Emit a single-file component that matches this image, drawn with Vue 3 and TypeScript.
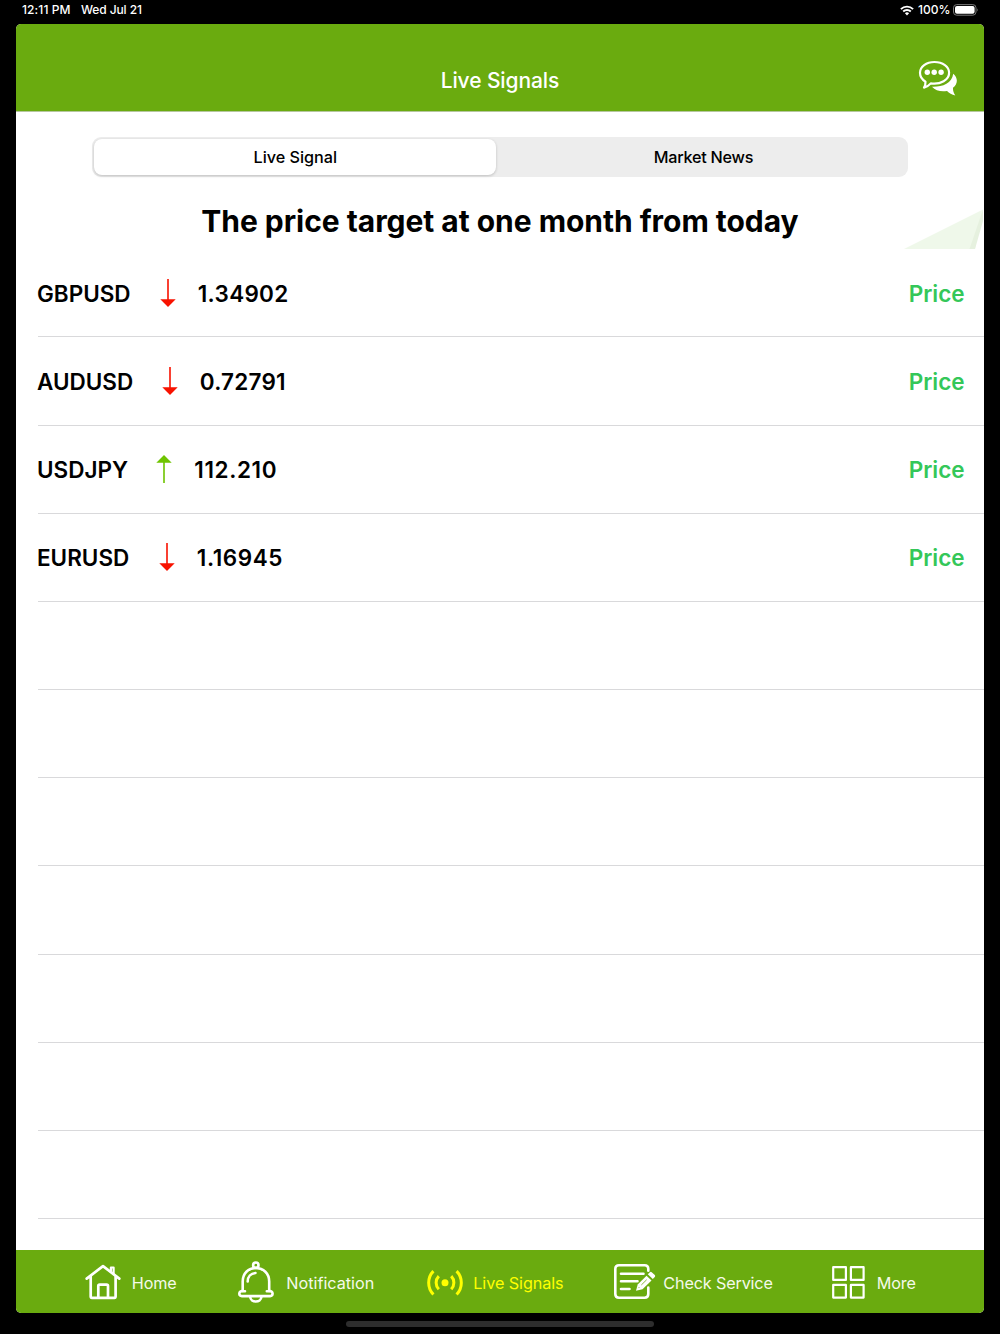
<script setup lang="ts">
import { ref } from 'vue'

interface Signal {
  pair: string
  value: string
  trend: 'up' | 'down'
  pairWidth: number
  spacing: number
}

const signals: Signal[] = [
  { pair: 'GBPUSD', value: '1.34902', trend: 'down', pairWidth: 93.3, spacing: 0.3 },
  { pair: 'AUDUSD', value: '0.72791', trend: 'down', pairWidth: 95.3, spacing: 0.2 },
  { pair: 'USDJPY', value: '112.210', trend: 'up', pairWidth: 89.8, spacing: 0.6 },
  { pair: 'EURUSD', value: '1.16945', trend: 'down', pairWidth: 92.3, spacing: 0.6 },
]
const emptyRows = 7
const segments = ['Live Signal', 'Market News']
const selected = ref(0)
</script>

<template>
  <div class="device">
    <div class="status">
      <span class="time">12:11 PM</span>
      <span class="date">Wed Jul 21</span>
      <svg class="wifi" width="14" height="11" viewBox="0 0 14 11" fill="none" stroke="#fff" stroke-width="1.9">
        <path d="M.9 4.1a8.7 8.7 0 0 1 12.2 0M3.2 6.5a5.4 5.4 0 0 1 7.6 0" />
        <path d="M7 10.5 4.9 8.3a3 3 0 0 1 4.2 0z" fill="#fff" stroke="none" />
      </svg>
      <span class="percent">100%</span>
      <svg class="battery" width="26" height="12" viewBox="0 0 26 12">
        <rect x=".5" y=".6" width="22.5" height="10.6" rx="3.2" fill="none" stroke="#777" />
        <rect x="2" y="2" width="19.6" height="7.8" rx="2" fill="#fff" />
        <path d="M24 4.2q1.6 1.7 0 3.4z" fill="#777" />
      </svg>
    </div>

    <div class="screen">
      <header class="bar">
        <h1>Live Signals</h1>
        <svg class="chat" width="40" height="37" viewBox="0 0 40 37">
          <path d="M35.200 13.800c4.800 4.100 5 10-.2 14-.2 2.700.6 5.200 2.300 7.700-3.400-.8-6.200-2.400-8.300-4.500-6.400.8-11.600-.3-15-4.200 10.200.3 20-3.200 21.200-13z" fill="#fff" />
          <path d="M16.400 2C8.300 2 2 6.700 2 12.800c0 3.800 2.100 6.900 5.500 8.900.1 2.500-.4 4.100-1.500 5.900 3-.8 5.100-2.200 6.800-4.200 9.800 1.300 18.300-3.500 18.300-10.600C31.100 6.700 24.800 2 16.400 2z" fill="#6aab0f" stroke="#fff" stroke-width="2.200" stroke-linejoin="round" />
          <g fill="#fff">
            <circle cx="9.300" cy="12.300" r="2.700" />
            <circle cx="16.200" cy="12.300" r="2.700" />
            <circle cx="23.100" cy="12.300" r="2.700" />
          </g>
        </svg>
      </header>

      <section class="top">
        <div class="segmented">
          <button
            v-for="(label, i) in segments"
            :key="label"
            :class="{ active: selected === i }"
            @click="selected = i"
          >{{ label }}</button>
        </div>
        <h2>The price target at one month from today</h2>
        <svg class="fold" width="80" height="40" viewBox="0 0 80 40">
          <path d="M0 40 79 .5 71 40z" fill="#eff8ea" />
          <path d="M79 .5 65.500 40H71L79 12z" fill="#e6f1df" />
        </svg>
      </section>

      <ul class="list">
        <li v-for="s in signals" :key="s.pair">
          <span class="pair" :style="{ width: s.pairWidth + 'px' }">{{ s.pair }}</span>
          <svg class="arrow" :class="s.trend" width="16" height="28" viewBox="0 0 16 28">
            <path d="M7.200 0h1.600v20.200h6.900L8 28 .3 20.200h6.900z" fill="currentColor" />
          </svg>
          <span class="value" :style="{ letterSpacing: s.spacing + 'px' }">{{ s.value }}</span>
          <span class="price">Price</span>
        </li>
        <li v-for="n in emptyRows" :key="n"></li>
      </ul>

      <nav class="tabs">
        <a class="home">
          <svg width="36" height="36" viewBox="0 0 36 36" fill="none" stroke="#fff" stroke-width="2.700" stroke-linecap="round" stroke-linejoin="round">
            <path d="M1.700 14.600 18 2.100l16.300 12.500M5.700 12.300v20.300q0 1.200 1.200 1.200h22.500q1.200 0 1.200-1.200V12.300" />
            <path d="M13.300 33.500V22q0-1.400 1.400-1.400h6.900Q23 20.600 23 22v11.500" />
            <path d="M25.900 7V3.500h2.700v5.800" stroke-width="2.200" />
          </svg>
          <span>Home</span>
        </a>
        <a class="notification">
          <svg width="36" height="42" viewBox="0 0 36 42" fill="none" stroke="#fff" stroke-width="2.600" stroke-linecap="round" stroke-linejoin="round">
            <circle cx="17.800" cy="4.200" r="2.700" />
            <path d="M7 30.300H4.600a2.500 2.500 0 0 0-3.300 2.300q0 2.500 2.600 2.500h28.200q2.500 0 2.500-2.500a2.500 2.500 0 0 0-3.300-2.300h-2.500" />
            <path d="M4.700 30V20.500C4.700 12.500 10.200 7 17.800 7s13.400 5.500 13.400 13.500V30M12.200 36c.5 6 10.700 6 11.200 0M9.700 20.500c0-4.800 3-8.100 7.800-8.500" />
          </svg>
          <span>Notification</span>
        </a>
        <a class="live">
          <svg width="36" height="26" viewBox="0 0 36 26" fill="none" stroke="#ff0" stroke-width="3">
            <circle cx="18" cy="12.700" r="3.500" fill="#ff0" stroke="none" />
            <path d="M11.800 6.100a9.500 9.500 0 0 0 0 13.200M24.200 6.100a9.500 9.500 0 0 1 0 13.200M6.400 1.100C.1 7.600.1 18 6.400 24.500M29.600 1.100c6.300 6.500 6.300 16.900 0 23.400" />
          </svg>
          <span>Live Signals</span>
        </a>
        <a class="check">
          <svg width="42" height="36" viewBox="0 0 42 36" fill="none" stroke="#fff" stroke-width="2.600" stroke-linecap="round" stroke-linejoin="round">
            <path d="M34.300 6.800V5q0-3.700-3.700-3.700H5Q1.300 1.300 1.300 5v25q0 3.700 3.700 3.700h25.600q3.700 0 3.700-3.700v-6.500M7 9.800h22.500M7 17.300h16.500M7 25h8.500" />
            <path d="m22 26.800 1.700-6.300 8.800-8.800 5 4.800-9 8.700z" fill="#fff" stroke="none" />
            <path d="m33.800 10.300 2.100-2.100q.9-.9 1.800 0l3.100 2.900q.9.900 0 1.800l-2 2.100z" fill="#fff" stroke="none" />
            <path d="m27.600 20.700 4.800-4.700M24.700 23.800l.3-.3" stroke="#6aab0f" stroke-width=".8" />
          </svg>
          <span>Check Service</span>
        </a>
        <a class="more">
          <svg width="33" height="33" viewBox="0 0 33 33" fill="none" stroke="#fff" stroke-width="2.200" stroke-linejoin="round">
            <path d="M1.200 1.200h12.700v12.700H1.200zM18.900 1.200h12.700v12.700H18.900zM1.200 18.900h12.700v12.700H1.200zM18.900 18.900h12.700v12.700H18.900z" />
          </svg>
          <span>More</span>
        </a>
      </nav>
    </div>
    <div class="indicator"></div>
  </div>
</template>

<style>
body {
  margin: 0;
  background: #000;
}
</style>

<style scoped>
* {
  box-sizing: border-box;
}
.device {
  width: 1000px;
  height: 1334px;
  background: #000;
  font-family: Inter, Roboto, sans-serif;
  display: flex;
  flex-direction: column;
  overflow: hidden;
}
.status {
  height: 24px;
  flex: none;
  display: flex;
  align-items: center;
  padding: 0 21px 4px 22px;
  color: #fff;
  font-size: 12px;
  line-height: 20px;
  font-weight: 500;
  white-space: nowrap;
}
.time {
  width: 59px;
  letter-spacing: 0.1px;
}
.date {
  letter-spacing: -0.1px;
}
.wifi {
  margin-left: auto;
  margin-right: 4px;
}
.percent {
  width: 35px;
}
.screen {
  width: 967.3px;
  height: 1289px;
  flex: none;
  margin-left: 16.3px;
  background: #fff;
  border-radius: 5px;
  overflow: hidden;
  display: flex;
  flex-direction: column;
}
.bar {
  height: 88px;
  flex: none;
  background: #6aab0f;
  border-bottom: 1px solid #b6c79f;
  display: flex;
  justify-content: flex-end;
  padding: 36px 26px 0 0;
  position: relative;
}
h1 {
  margin: 0;
  position: absolute;
  left: 0;
  right: 0;
  top: 43px;
  text-align: center;
  color: #fff;
  font-size: 21px;
  line-height: 28px;
  font-weight: 500;
  letter-spacing: -0.1px;
}
.top {
  height: 137.3px;
  flex: none;
  padding: 25px 76px 0;
  position: relative;
}
.segmented {
  height: 40px;
  background: #ededed;
  border-radius: 9px;
  padding: 2px;
  display: flex;
}
.segmented button {
  border: 0;
  background: none;
  padding: 0;
  flex: 1;
  margin-left: 5px;
  border-radius: 8px;
  color: #000;
  font: 500 16.2px/36px Inter, sans-serif;
  letter-spacing: -0.25px;
}
.segmented .active {
  background: #fff;
  flex: none;
  width: 402px;
  margin-left: 0;
  letter-spacing: 0;
  box-shadow: 0 1px 3px rgba(0, 0, 0, 0.2);
}
h2 {
  margin: 24px -20px 0;
  font-size: 30px;
  line-height: 40px;
  font-weight: 700;
  color: #000;
  text-align: center;
  white-space: nowrap;
  letter-spacing: -0.04px;
}
.fold {
  position: absolute;
  right: 0;
  bottom: 0;
}
.list {
  list-style: none;
  margin: 0;
  padding: 0 0 0 21.7px;
  flex: 1;
}
.list li {
  height: 88.17px;
  border-bottom: 1px solid #d9d9db;
  display: flex;
  align-items: center;
  padding-top: 2px;
  padding-right: 19px;
  font-size: 22.5px;
  font-weight: 600;
  line-height: 30px;
  color: #000;
  white-space: nowrap;
}
.pair {
  margin-left: -1px;
}
.arrow {
  margin: 0 22px 2px 29.5px;
}
.down {
  color: #f81200;
}
.up {
  color: #6fc400;
  transform: rotate(180deg);
}
.price {
  margin-left: auto;
  color: #34c759;
}
.tabs {
  height: 63.5px;
  flex: none;
  background: #6aab0f;
  display: grid;
  grid-template-columns: 153px 189px 187px 218px 120px;
  padding: 2px 0 0 69px;
  align-items: center;
  color: #f5faea;
  font-size: 16.2px;
  line-height: 24px;
  letter-spacing: -0.15px;
}
.tabs a {
  display: flex;
  align-items: center;
  white-space: nowrap;
}
.tabs span {
  padding-top: 2px;
}
.home span {
  margin-left: 10.5px;
}
.notification span {
  margin-left: 12px;
  letter-spacing: 0;
}
.live {
  color: #ff0;
}
.live svg {
  margin-top: 1px;
}
.live span {
  margin-left: 10px;
  letter-spacing: -0.08px;
}
.check span {
  margin-left: 7px;
}
.more span {
  margin-left: 11.5px;
}
.indicator {
  width: 308px;
  height: 5.5px;
  border-radius: 3px;
  background: #2d2d2d;
  margin: 8px auto 0;
}
</style>
